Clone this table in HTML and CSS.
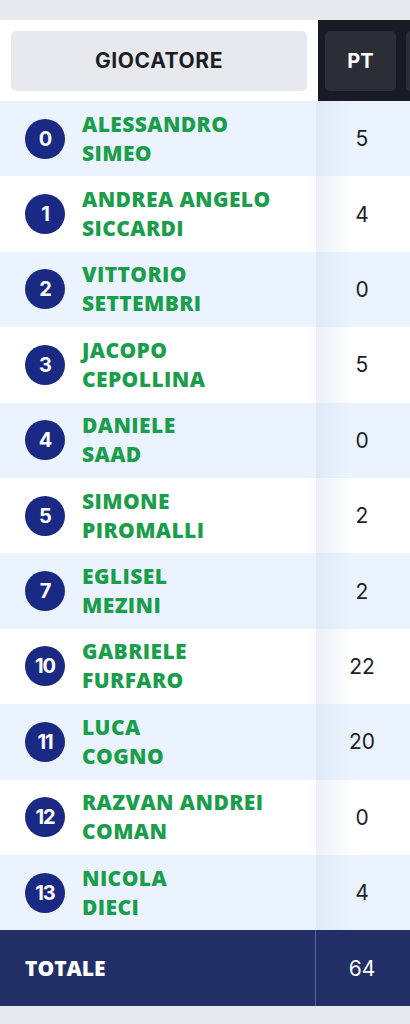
FILE: index.html
```html
<!DOCTYPE html>
<html lang="it">
<head>
<meta charset="utf-8">
<title>Tabellino</title>
<link rel="stylesheet" href="styles.css">
</head>
<body>
<div class="table">
  <div class="row head">
    <div class="cell-name"><div class="hbtn">GIOCATORE</div></div>
    <div class="cell-pt dark"><div class="hbtn pt">PT</div><div class="hbtn pt next"></div></div>
  </div>
  <div class="row alt"><div class="cell-name"><span class="badge">0</span><span class="name">ALESSANDRO<br>SIMEO</span></div><div class="cell-pt">5</div></div>
  <div class="row"><div class="cell-name"><span class="badge">1</span><span class="name">ANDREA ANGELO<br>SICCARDI</span></div><div class="cell-pt">4</div></div>
  <div class="row alt"><div class="cell-name"><span class="badge">2</span><span class="name">VITTORIO<br>SETTEMBRI</span></div><div class="cell-pt">0</div></div>
  <div class="row"><div class="cell-name"><span class="badge">3</span><span class="name">JACOPO<br>CEPOLLINA</span></div><div class="cell-pt">5</div></div>
  <div class="row alt"><div class="cell-name"><span class="badge">4</span><span class="name">DANIELE<br>SAAD</span></div><div class="cell-pt">0</div></div>
  <div class="row"><div class="cell-name"><span class="badge">5</span><span class="name">SIMONE<br>PIROMALLI</span></div><div class="cell-pt">2</div></div>
  <div class="row alt"><div class="cell-name"><span class="badge">7</span><span class="name">EGLISEL<br>MEZINI</span></div><div class="cell-pt">2</div></div>
  <div class="row"><div class="cell-name"><span class="badge">10</span><span class="name">GABRIELE<br>FURFARO</span></div><div class="cell-pt">22</div></div>
  <div class="row alt"><div class="cell-name"><span class="badge">11</span><span class="name">LUCA<br>COGNO</span></div><div class="cell-pt">20</div></div>
  <div class="row"><div class="cell-name"><span class="badge">12</span><span class="name">RAZVAN ANDREI<br>COMAN</span></div><div class="cell-pt">0</div></div>
  <div class="row alt"><div class="cell-name"><span class="badge">13</span><span class="name">NICOLA<br>DIECI</span></div><div class="cell-pt">4</div></div>
  <div class="row total"><div class="cell-name"><span class="tot-label">TOTALE</span></div><div class="cell-pt">64</div></div>
</div>
</body>
</html>
```
FILE: styles.css
```css
html, body {
  margin: 0;
  padding: 0;
  background: #e8e9ed;
}
body {
  font-family: "Open Sans", "Liberation Sans", sans-serif;
  width: 410px;
  overflow: hidden;
}
.table {
  margin-top: 20px;
  display: flex;
  flex-direction: column;
}
.row {
  display: flex;
  height: 75.4px;
  background: #ffffff;
}
.row.alt {
  background: #ebf4fe;
}
.cell-name {
  flex: 1;
  display: flex;
  align-items: center;
  padding-left: 25px;
  gap: 17px;
}
.cell-pt {
  width: 92px;
  flex: none;
  display: flex;
  align-items: center;
  justify-content: center;
  font-family: "Inter", sans-serif;
  font-weight: 400;
  font-size: 21px;
  color: #1d1f26;
  background: linear-gradient(to right, rgba(200,215,235,0.35), rgba(255,255,255,0) 40px);
  padding-right: 2px;
}
.row.head {
  height: 81px;
}
.row.head .cell-name {
  padding: 10px 11px 10px 11px;
}
.hbtn {
  flex: 1;
  height: 60px;
  border-radius: 5px;
  background: #e8e9ed;
  display: flex;
  align-items: center;
  justify-content: center;
  font-family: "Inter", sans-serif;
  font-weight: 700;
  font-size: 21px;
  letter-spacing: 0.6px;
  color: #1b1d26;
}
.cell-pt.dark {
  background: #181a25;
  justify-content: flex-start;
  align-items: center;
  padding: 0 0 0 7px;
  gap: 10px;
  overflow: hidden;
  box-sizing: border-box;
}
.hbtn.pt {
  flex: none;
  width: 71px;
  background: #2b2d37;
  color: #ffffff;
  font-size: 20px;
  letter-spacing: 0;
}
.hbtn.next {
  width: 40px;
}
.badge {
  width: 40px;
  height: 40px;
  border-radius: 50%;
  background: #1a2a84;
  color: #ffffff;
  display: flex;
  align-items: center;
  justify-content: center;
  font-family: "Inter", sans-serif;
  font-weight: 700;
  font-size: 20px;
  letter-spacing: -1px;
  flex: none;
}
.name {
  color: #1b9d4c;
  font-weight: 800;
  font-size: 21px;
  line-height: 29px;
  letter-spacing: 0.4px;
}
.row.total {
  height: 76px;
  background: #222f66;
}
.tot-label {
  color: #ffffff;
  font-weight: 800;
  font-size: 21px;
  letter-spacing: 0;
}
.row.total .cell-pt {
  background: none;
  color: #ffffff;
  border-left: 1px solid #5a6494;
}
```
